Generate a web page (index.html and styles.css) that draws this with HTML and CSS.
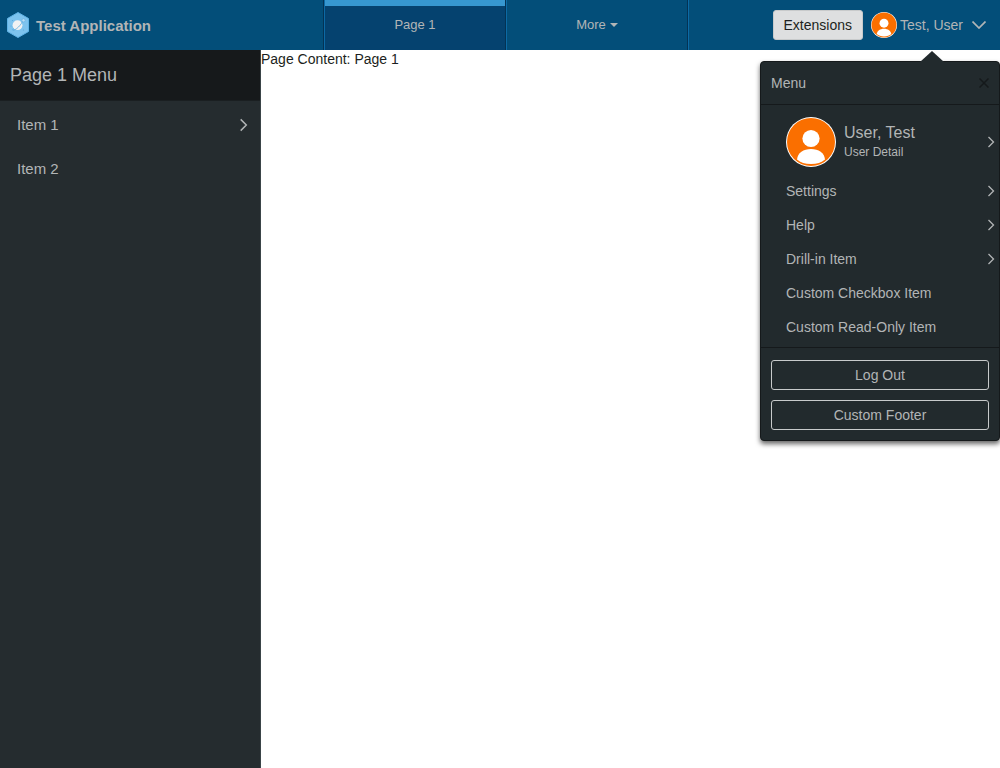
FILE: index.html
```html
<!DOCTYPE html>
<html lang="en">
<head>
<meta charset="utf-8">
<meta name="viewport" content="width=device-width, initial-scale=1">
<title>Test Application</title>
<link rel="stylesheet" href="styles.css">
</head>
<body>
<svg class="defs" aria-hidden="true">
  <symbol id="avatar" viewBox="0 0 50 50">
    <circle cx="25" cy="25" r="25" fill="#fff"/>
    <circle cx="25" cy="25" r="24" fill="#fa6f00"/>
    <circle cx="25" cy="21.500" r="8.600" fill="#fff"/>
    <path d="M11 42.500C11.500 36 17.500 32 25 32s13.500 4 14 10.500C35.500 45.500 31 47 25 47s-10.500-1.500-14-4.500z" fill="#fff"/>
  </symbol>
  <symbol id="chevron" viewBox="0 0 8 12">
    <path d="M1.500 1l5 5-5 5" fill="none" stroke="currentColor" stroke-width="1.300"/>
  </symbol>
</svg>
<div class="app">
  <header class="header">
    <div class="brand">
      <svg class="logo" viewBox="0 0 24 26" aria-hidden="true">
        <path d="M12 .5L22.500 6.500v13L12 25.500 1.500 19.500v-13z" fill="#7dc3ee" stroke="#5fb3e6"/>
        <circle cx="11.500" cy="13.200" r="4.900" fill="#f1f2f3"/>
        <path d="M7.500 16.500c-2.500 3.500 2 1.500 5-1.500 2.500-2.500 4-5 4-6" fill="none" stroke="#5aa9dc" stroke-width=".8"/>
        <circle cx="17.500" cy="8.300" r="1.600" fill="#b9def5" stroke="#5aa9dc" stroke-width=".5"/>
        <circle cx="6.500" cy="8.500" r=".6" fill="#5aa9dc"/>
        <circle cx="5" cy="14" r=".6" fill="#5aa9dc"/>
        <circle cx="17.500" cy="18" r=".6" fill="#5aa9dc"/>
      </svg>
      <span class="brand-name">Test Application</span>
    </div>
    <nav class="tabs" aria-label="Pages">
      <a class="tab tab-active" href="#page1" aria-current="page">Page 1</a>
      <button class="tab" type="button">More<span class="caret"></span></button>
    </nav>
    <div class="utilities">
      <button class="extensions" type="button">Extensions</button>
      <button class="user" type="button" aria-expanded="true">
        <svg class="user-avatar" aria-hidden="true"><use href="#avatar"/></svg>
        <span class="user-name">Test, User</span>
        <svg class="user-chevron" viewBox="0 0 14 8" aria-hidden="true"><path d="M.5.500l6.500 6.500L13.500.500" fill="none" stroke="currentColor" stroke-width="1.700"/></svg>
      </button>
      <section class="popup" aria-label="User menu">
        <div class="popup-header">
          <h2 class="popup-title">Menu</h2>
          <button class="close" type="button" aria-label="Close"><svg class="close-icon" viewBox="0 0 10 10"><path d="M.5.500l9 9M9.500.500l-9 9" stroke="currentColor" stroke-width="1.500"/></svg></button>
        </div>
        <ul class="popup-list">
          <li><button class="option option-user" type="button">
            <svg class="large-avatar" aria-hidden="true"><use href="#avatar"/></svg>
            <span class="details"><span class="details-name">User, Test</span><span class="details-note">User Detail</span></span>
            <svg class="chevron" aria-hidden="true"><use href="#chevron"/></svg>
          </button></li>
          <li><button class="option" type="button">Settings<svg class="chevron" aria-hidden="true"><use href="#chevron"/></svg></button></li>
          <li><button class="option" type="button">Help<svg class="chevron" aria-hidden="true"><use href="#chevron"/></svg></button></li>
          <li><button class="option" type="button">Drill-in Item<svg class="chevron" aria-hidden="true"><use href="#chevron"/></svg></button></li>
          <li><button class="option" type="button">Custom Checkbox Item</button></li>
          <li><button class="option" type="button">Custom Read-Only Item</button></li>
        </ul>
        <div class="popup-footer">
          <button class="footer-button" type="button">Log Out</button>
          <button class="footer-button" type="button">Custom Footer</button>
        </div>
      </section>
    </div>
  </header>
  <div class="body">
    <aside class="sidebar">
      <h1 class="sidebar-title">Page 1 Menu</h1>
      <nav class="side-nav" aria-label="Page 1 Menu">
        <a class="side-item" href="#item1">Item 1<svg class="side-chevron" aria-hidden="true"><use href="#chevron"/></svg></a>
        <a class="side-item" href="#item2">Item 2</a>
      </nav>
    </aside>
    <main class="content">Page Content: Page 1</main>
  </div>
</div>
</body>
</html>
```
FILE: styles.css
```css
* {
  box-sizing: border-box;
}

body {
  margin: 0;
  background: #fff;
  color: #1c1f21;
  font: 14px/18px "Liberation Sans", Arial, sans-serif;
}

button {
  margin: 0;
  padding: 0;
  border: 0;
  background: none;
  color: inherit;
  font: inherit;
  cursor: pointer;
}

a {
  color: inherit;
  text-decoration: none;
}

.defs {
  position: absolute;
  width: 0;
  height: 0;
}

.app {
  display: flex;
  flex-direction: column;
  min-height: 100vh;
}

.header {
  display: grid;
  grid-template-columns: minmax(160px, 323fr) minmax(180px, 366fr) minmax(240px, 311fr);
  height: 50px;
  background: #034e79;
  color: #b2b5b6;
}

.brand {
  display: flex;
  align-items: center;
  gap: 6px;
  padding-left: 6px;
}

.logo {
  width: 24px;
  height: 26px;
}

.brand-name {
  padding-top: 2px;
  font-size: 15px;
  font-weight: bold;
}

.tabs {
  display: flex;
  border-left: 1px solid #033355;
  border-right: 1px solid #0c6aa5;
}

.tab {
  display: flex;
  flex: 1;
  align-items: center;
  justify-content: center;
  border-left: 1px solid #0c6aa5;
  border-right: 1px solid #033355;
  font-size: 13px;
}

.tab-active {
  background: linear-gradient(#3797d0 6px, #05426f 6px);
}

.caret {
  margin-left: 4px;
  border: 4px solid transparent;
  border-top-color: currentColor;
  border-bottom: 0;
}

.utilities {
  position: relative;
  display: flex;
  align-items: center;
  justify-content: flex-end;
  gap: 8px;
  padding-right: 14px;
}

.extensions {
  height: 30px;
  padding: 0 10px;
  border: 1px solid #c8cacb;
  border-radius: 3px;
  background: #dedfe0;
  color: #1c1f21;
}

.user {
  display: flex;
  align-items: center;
}

.user-avatar {
  width: 26px;
  height: 26px;
  margin-right: 3px;
}

.user-chevron {
  width: 14px;
  height: 8px;
  margin-left: 9px;
}

.popup {
  position: absolute;
  z-index: 1;
  top: 61px;
  right: 0;
  width: 240px;
  border: 1px solid #15191b;
  border-radius: 4px;
  background: #222a2d;
  box-shadow: 0 3px 5px rgba(0, 0, 0, 0.6);
}

.popup::before {
  position: absolute;
  right: 55px;
  bottom: 100%;
  border: 12px solid transparent;
  border-top: 0;
  border-bottom: 11px solid #222a2d;
  content: "";
}

.popup-header {
  display: flex;
  align-items: center;
  justify-content: space-between;
  height: 43px;
  padding: 0 10px;
  border-bottom: 1px solid #15191b;
}

.popup-title {
  margin: 0;
  font-size: 14px;
  font-weight: normal;
}

.close {
  display: flex;
  color: #15191b;
}

.close-icon {
  width: 10px;
  height: 10px;
}

.popup-list {
  margin: 0;
  padding: 5px 0 3px;
  border-bottom: 1px solid #15191b;
  list-style: none;
}

.option {
  display: flex;
  align-items: center;
  width: 100%;
  height: 34px;
  padding: 0 4px 0 25px;
  text-align: left;
}

.option-user {
  height: 64px;
}

.large-avatar {
  width: 50px;
  height: 50px;
  margin-right: 8px;
}

.details {
  display: flex;
  flex-direction: column;
}

.details-name {
  font-size: 16px;
  line-height: 20px;
}

.details-note {
  font-size: 12px;
}

.chevron {
  width: 8px;
  height: 12px;
  margin-left: auto;
}

.popup-footer {
  display: flex;
  flex-direction: column;
  gap: 10px;
  padding: 12px 10px 10px;
}

.footer-button {
  height: 30px;
  border: 1px solid #c8cacb;
  border-radius: 3px;
}

.body {
  display: flex;
  flex: 1;
}

.sidebar {
  flex: 0 0 261px;
  border-right: 1px solid #3a4447;
  background: #252c2f;
  color: #b2b5b6;
}

.sidebar-title {
  margin: 0;
  padding: 15px 10px;
  border-bottom: 1px solid #1a1f21;
  background: #16191b;
  font-size: 18px;
  font-weight: normal;
  line-height: 20px;
}

.side-nav {
  padding: 2px 0;
}

.side-item {
  display: flex;
  align-items: center;
  justify-content: space-between;
  height: 44px;
  padding: 0 12px 0 17px;
  font-size: 15px;
}

.side-chevron {
  width: 9px;
  height: 14px;
}

.content {
  flex: 1;
}
```
